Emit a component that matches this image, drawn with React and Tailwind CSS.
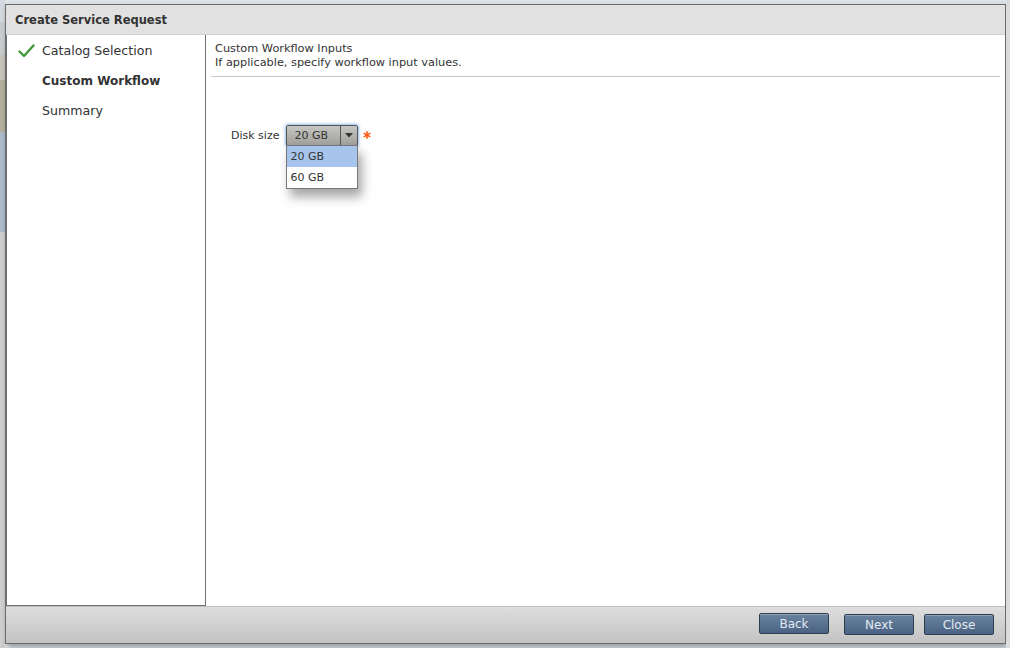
import React from 'react'

const font = { fontFamily: '"DejaVu Sans", Verdana, sans-serif' }

const Check = () => (
    <svg width="17" height="14" viewBox="0 0 17 14" className="shrink-0">
        <path d="M1.5 7.5 L6 12 L15.5 1.5" fill="none" stroke="#3f9a3a" strokeWidth="2.4" strokeLinecap="round" strokeLinejoin="round" />
    </svg>
)

const Star = () => (
    <svg width="8" height="8" viewBox="0 0 8 8" className="shrink-0">
        <g stroke="#ff5a14" strokeWidth="1.6" strokeLinecap="round">
            <path d="M4 0.8 V7.2" />
            <path d="M1.2 2.4 L6.8 5.6" />
            <path d="M1.2 5.6 L6.8 2.4" />
        </g>
    </svg>
)

const Button = ({ children }) => (
    <button className="w-[70px] h-[21px] rounded-[2px] border border-[#2f3d4e] bg-gradient-to-b from-[#6a83a0] to-[#4a6383] text-[12px] text-[#e3eaf2] leading-none shadow-[inset_0_1px_0_rgba(255,255,255,0.25)]">
        {children}
    </button>
)

export default function App() {
    return (
        <div style={font} className="w-[1010px] h-[648px] overflow-hidden bg-[#dfe6ea] flex">
            {/* backdrop strip on the left */}
            <div className="w-[5px] flex flex-col shrink-0">
                <div className="h-[22px] bg-[#d4dbe0]"></div>
                <div className="h-[33px] bg-[#c9cdd0]"></div>
                <div className="h-[25px] bg-[#c8c5bc]"></div>
                <div className="h-[52px] bg-[#b7b29f]"></div>
                <div className="h-[100px] bg-[#aebccb]"></div>
                <div className="flex-1 bg-[#d0d0d0]"></div>
            </div>

            {/* dialog */}
            <div className="mt-[4px] w-[1001px] h-[640px] border border-[#6b6b6b] bg-[#e0e0e0] flex flex-col shadow-[2px_3px_6px_rgba(0,0,0,0.35)]">
                {/* title bar */}
                <div className="h-[30px] flex items-center pl-[9px] pt-[2px] bg-[#e1e1e1] border-b border-[#cfcfcf]">
                    <span className="text-[11.5px] font-bold text-[#333]">Create Service Request</span>
                </div>

                {/* body */}
                <div className="flex-1 flex min-h-0 bg-white">
                    {/* steps */}
                    <div className="w-[200px] border border-[#707070] border-t-0 bg-white pt-[1px] flex flex-col">
                        <div className="h-[30px] flex items-center pl-[11px] gap-[7px]">
                            <Check />
                            <span className="text-[12.6px] text-[#333]">Catalog Selection</span>
                        </div>
                        <div className="h-[30px] flex items-center pl-[35px]">
                            <span className="text-[12px] font-bold text-[#333]">Custom Workflow</span>
                        </div>
                        <div className="h-[30px] flex items-center pl-[35px]">
                            <span className="text-[12.6px] text-[#333]">Summary</span>
                        </div>
                    </div>

                    {/* content */}
                    <div className="flex-1 flex flex-col pl-[5px] pr-[5px]">
                        <div className="pl-[4px] pt-[7px] pb-[6px] border-b border-[#c8c8c8] text-[11.3px] leading-[14px] text-[#333]">
                            <div>Custom Workflow Inputs</div>
                            <div>If applicable, specify workflow input values.</div>
                        </div>

                        <div className="pt-[48px] pl-[20px] flex items-start">
                            <span className="text-[11px] text-[#333] mt-[3px] mr-[7px]">Disk size</span>
                            <div className="relative">
                                <div className="w-[72px] h-[21px] flex border border-[#555] rounded-[2px] bg-gradient-to-b from-[#c6c6c2] to-[#a09f9b] shadow-[0_0_3px_1px_rgba(120,170,230,0.8)]">
                                    <span className="flex-1 text-[11px] text-[#333] pl-[7px] leading-[19px]">20 GB</span>
                                    <span className="w-[17px] border-l border-[#555] flex items-center justify-center">
                                        <svg width="8" height="5" viewBox="0 0 8 5"><path d="M0 0 H8 L4 4.5 Z" fill="#333" /></svg>
                                    </span>
                                </div>
                                <div className="absolute top-[20px] left-0 w-[72px] border border-[#777] bg-white shadow-[4px_8px_10px_rgba(0,0,0,0.35)]">
                                    <div className="h-[21px] bg-[#a7c5ec] text-[11px] text-[#333] pl-[3px] leading-[21px]">20 GB</div>
                                    <div className="h-[21px] text-[11px] text-[#333] pl-[3px] leading-[21px]">60 GB</div>
                                </div>
                            </div>
                            <span className="ml-[5px] mt-[6px]"><Star /></span>
                        </div>
                    </div>
                </div>

                {/* footer */}
                <div className="h-[37px] flex items-center justify-end pr-[11px] pb-[3px] bg-gradient-to-b from-[#dedede] to-[#c2c2c2] border-t border-[#bdbdbd]">
                    <Button>Back</Button>
                    <div className="ml-[15px]"><Button>Next</Button></div>
                    <div className="ml-[10px]"><Button>Close</Button></div>
                </div>
            </div>

            <div className="flex-1 bg-[#d8dcdd]"></div>
        </div>
    )
}
